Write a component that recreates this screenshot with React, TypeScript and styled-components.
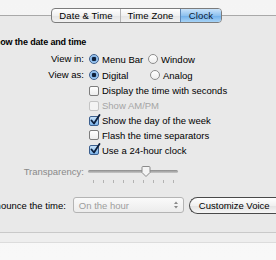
import React from "react"
import styled, { createGlobalStyle } from "styled-components"

const GlobalStyle = createGlobalStyle`
  html, body {
    margin: 0;
    padding: 0;
    background: #f6f6f6;
  }
  body {
    font-family: "Liberation Sans", Arial, sans-serif;
    font-size: 9.5px;
    color: #000;
  }
`

const Window = styled.div`
  width: 276px;
  height: 260px;
  overflow: hidden;
  padding-top: 15px;
  box-sizing: border-box;
  background: linear-gradient(#f4f4f4, #f8f8f8);
`

const Panel = styled.div`
  height: 218px;
  box-sizing: border-box;
  background: #e9e9e9;
  border-top: 1px solid #a9a9a9;
  border-bottom: 1px solid #c9c9c9;
  display: flex;
  flex-direction: column;
`

const Footer = styled.div`
  height: 9px;
  background: #eeeeee;
  border-bottom: 1px solid #dcdcdc;
`

const TabStrip = styled.div`
  display: flex;
  justify-content: center;
  margin-top: -8px;
  padding-right: 3px;
`

const Tabs = styled.div`
  display: flex;
  height: 15px;
  box-sizing: border-box;
  border: 1px solid #7c7c7c;
  border-radius: 4px;
  overflow: hidden;
  background: linear-gradient(#ffffff, #f0f0f0 50%, #e4e4e4 51%, #f2f2f2);
`

const Tab = styled.div<{ $selected?: boolean; $w: number }>`
  width: ${(p) => p.$w}px;
  display: flex;
  align-items: center;
  justify-content: center;
  font-size: 9.5px;
  letter-spacing: 0.1px;
  border-left: 1px solid #b5b5b5;
  &:first-child {
    border-left: none;
  }
  ${(p) =>
    p.$selected &&
    `
    background: linear-gradient(#c9e3fa, #8fc2ef 50%, #6eaee9 51%, #a7d3f6);
    border-left-color: #5b86b5;
    color: #0b1a33;
  `}
`

const Heading = styled.div`
  font-weight: bold;
  font-size: 9px;
  letter-spacing: -0.15px;
  margin: 13px 0 0 -11px;
  height: 12px;
  line-height: 12px;
`

const Form = styled.div`
  display: grid;
  grid-template-columns: 84px 1fr;
  column-gap: 5px;
  margin-top: 3px;
`

const Label = styled.div<{ $muted?: boolean; $h: number }>`
  text-align: right;
  height: ${(p) => p.$h}px;
  line-height: ${(p) => p.$h}px;
  color: ${(p) => (p.$muted ? "#8a8a8a" : "#000")};
  white-space: nowrap;
`

const Options = styled.div<{ $h: number }>`
  display: flex;
  align-items: center;
  height: ${(p) => p.$h}px;
`

const Option = styled.label<{ $w?: number; $muted?: boolean }>`
  display: flex;
  align-items: center;
  gap: 3px;
  width: ${(p) => (p.$w ? `${p.$w}px` : "auto")};
  color: ${(p) => (p.$muted ? "#a5a5a5" : "#000")};
  white-space: nowrap;
`

const Radio = styled.span<{ $on?: boolean }>`
  width: 10px;
  height: 10px;
  box-sizing: border-box;
  border-radius: 50%;
  border: 1px solid ${(p) => (p.$on ? "#3b5f8f" : "#8d8d8d")};
  background: ${(p) =>
    p.$on
      ? "radial-gradient(circle at 50% 50%, #10213a 0 2px, #7fb2e6 2.5px, #c5e0f8 5px)"
      : "linear-gradient(#ffffff, #eeeeee)"};
  flex: none;
`

const Box = styled.span<{ $on?: boolean; $disabled?: boolean }>`
  position: relative;
  width: 10px;
  height: 10px;
  box-sizing: border-box;
  border-radius: 2px;
  border: 1px solid ${(p) => (p.$disabled ? "#c4c4c4" : p.$on ? "#3b5f8f" : "#7d7d7d")};
  background: ${(p) =>
    p.$on ? "linear-gradient(#c7e1f8, #7eb5ea)" : p.$disabled ? "#f3f3f3" : "linear-gradient(#ffffff, #ededed)"};
  flex: none;
  svg {
    position: absolute;
    left: 0px;
    top: -3px;
  }
`

const Check = () => (
  <svg width="11" height="11" viewBox="0 0 11 11">
    <path d="M1.5 6.5 L4 9.5 L9.5 1" stroke="#0d1f3c" strokeWidth="1.8" fill="none" strokeLinecap="round" strokeLinejoin="round" />
  </svg>
)

const SliderWrap = styled.div`
  display: flex;
  flex-direction: column;
  width: 90px;
  margin-left: -1px;
`

const Track = styled.div`
  position: relative;
  height: 15px;
  display: flex;
  align-items: center;
  &::before {
    content: "";
    flex: 1;
    height: 3px;
    border-radius: 2px;
    background: linear-gradient(#8a8a8a, #c8c8c8);
  }
`

const Thumb = styled.svg`
  position: absolute;
  top: 2px;
`

const Ticks = styled.div`
  display: flex;
  justify-content: space-between;
  padding: 0 4px 0 5px;
  margin-top: 1px;
`

const Tick = styled.span`
  width: 1px;
  height: 3px;
  background: #b3b3b3;
`

const AnnounceRow = styled.div`
  display: flex;
  align-items: center;
  gap: 7px;
  margin-top: 14px;
  height: 17px;
`

const AnnounceLabel = styled.div`
  margin-left: -16px;
  white-space: nowrap;
`

const Popup = styled.div`
  width: 111px;
  height: 16px;
  box-sizing: border-box;
  border: 1px solid #b4b4b4;
  border-radius: 3px;
  background: linear-gradient(#fafafa, #ececec);
  color: #9d9d9d;
  display: flex;
  align-items: center;
  justify-content: space-between;
  padding: 0 4px 0 5px;
  flex: none;
`

const Button = styled.div`
  height: 17px;
  box-sizing: border-box;
  border: 1px solid #4a4a4a;
  border-right: none;
  border-radius: 9px 0 0 9px;
  background: linear-gradient(#ffffff, #f0f0f0 50%, #e2e2e2 51%, #f6f6f6);
  padding: 0 8px 0 9px;
  display: flex;
  align-items: center;
  white-space: nowrap;
  margin-left: -2px;
  flex: 1;
`

const Arrows = () => (
  <svg width="6" height="10" viewBox="0 0 6 10">
    <path d="M1 4 L3 1.5 L5 4 Z M1 6 L3 8.5 L5 6 Z" fill="#888" />
  </svg>
)

export default function App() {
  const ticks = Array.from({ length: 9 })
  return (
    <Window>
      <GlobalStyle />
      <Panel>
        <TabStrip>
          <Tabs>
            <Tab $w={68}>Date &amp; Time</Tab>
            <Tab $w={59}>Time Zone</Tab>
            <Tab $w={40} $selected>Clock</Tab>
          </Tabs>
        </TabStrip>
        <Heading>Show the date and time</Heading>
        <Form>
          <Label $h={16}>View in:</Label>
          <Options $h={16}>
            <Option $w={59}><Radio $on />Menu Bar</Option>
            <Option><Radio />Window</Option>
          </Options>
          <Label $h={16}>View as:</Label>
          <Options $h={16}>
            <Option $w={61}><Radio $on />Digital</Option>
            <Option><Radio />Analog</Option>
          </Options>
          <Label $h={15.5} />
          <Options $h={15.5}>
            <Option><Box />Display the time with seconds</Option>
          </Options>
          <Label $h={14.75} />
          <Options $h={14.75}>
            <Option $muted><Box $disabled />Show AM/PM</Option>
          </Options>
          <Label $h={14.75} />
          <Options $h={14.75}>
            <Option><Box $on><Check /></Box>Show the day of the week</Option>
          </Options>
          <Label $h={14.75} />
          <Options $h={14.75}>
            <Option><Box />Flash the time separators</Option>
          </Options>
          <Label $h={14.75} />
          <Options $h={14.75}>
            <Option><Box $on><Check /></Box>Use a 24-hour clock</Option>
          </Options>
          <Label $h={15} $muted style={{ marginTop: 6 }}>Transparency:</Label>
          <SliderWrap style={{ marginTop: 6 }}>
            <Track>
              <Thumb width="10" height="12" viewBox="0 0 10 12" style={{ left: 53 }}>
                <path d="M1 1.5 Q1 0.5 2 0.5 H8 Q9 0.5 9 1.5 V6.5 L5 10.5 L1 6.5 Z" fill="#f4f4f4" stroke="#8a8a8a" strokeWidth="1" />
              </Thumb>
            </Track>
            <Ticks>
              {ticks.map((_, i) => <Tick key={i} />)}
            </Ticks>
          </SliderWrap>
        </Form>
        <AnnounceRow>
          <AnnounceLabel>Announce the time:</AnnounceLabel>
          <Popup>
            <span>On the hour</span>
            <Arrows />
          </Popup>
          <Button>Customize Voice</Button>
        </AnnounceRow>
      </Panel>
      <Footer />
    </Window>
  )
}
